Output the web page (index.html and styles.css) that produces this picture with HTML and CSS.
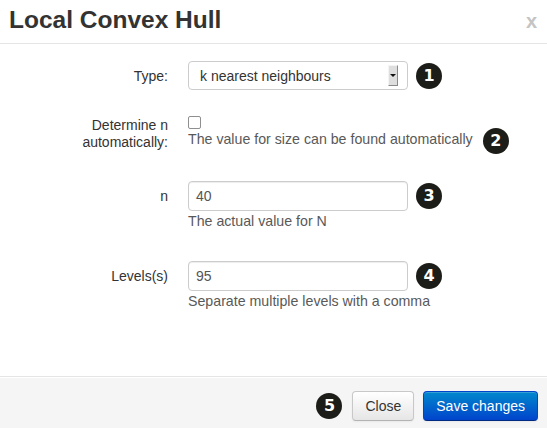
FILE: index.html
```html
<!DOCTYPE html>
<html>
<head>
<meta charset="utf-8">
<link rel="stylesheet" href="styles.css">
</head>
<body>
<div class="modal">
  <div class="modal-header">
    <h3 class="title">Local Convex Hull</h3>
    <span class="close">x</span>
  </div>
  <div class="modal-body">
    <div class="row">
      <label class="control-label">Type:</label>
      <div class="controls">
        <div class="line">
          <div class="select">
            <span class="select-text">k nearest neighbours</span>
            <span class="select-btn"><span class="tri"></span></span>
          </div>
          <span class="badge">1</span>
        </div>
      </div>
    </div>
    <div class="row row-check">
      <label class="control-label two">Determine n automatically:</label>
      <div class="controls">
        <div class="check-wrap"><span class="checkbox"></span></div>
        <div class="line">
          <span class="help">The value for size can be found automatically</span>
          <span class="badge badge-help">2</span>
        </div>
      </div>
    </div>
    <div class="row">
      <label class="control-label">n</label>
      <div class="controls">
        <div class="line">
          <div class="input">40</div>
          <span class="badge">3</span>
        </div>
        <span class="help help-below">The actual value for N</span>
      </div>
    </div>
    <div class="row">
      <label class="control-label">Levels(s)</label>
      <div class="controls">
        <div class="line">
          <div class="input">95</div>
          <span class="badge">4</span>
        </div>
        <span class="help help-below">Separate multiple levels with a comma</span>
      </div>
    </div>
  </div>
  <div class="modal-footer">
    <span class="badge badge-foot">5</span>
    <button class="btn">Close</button>
    <button class="btn btn-primary">Save changes</button>
  </div>
</div>
</body>
</html>
```
FILE: styles.css
```css
html, body {
  margin: 0;
  padding: 0;
  overflow: hidden;
  background: #fff;
}
body {
  font-family: "Liberation Sans", Arial, sans-serif;
  font-size: 14px;
  line-height: 20px;
  color: #333;
}
.modal {
  width: 547px;
}
.modal-header {
  display: flex;
  justify-content: space-between;
  align-items: flex-start;
  height: 44px;
  box-sizing: border-box;
  padding: 5px 10px 0 9px;
  border-bottom: 1px solid #e5e5e5;
}
.title {
  margin: 0;
  font-size: 24.5px;
  line-height: 30px;
  font-weight: bold;
  color: #333;
}
.close {
  font-size: 20px;
  font-weight: bold;
  line-height: 20px;
  margin-top: 6px;
  color: #c4c4c4;
}
.modal-body {
  padding: 17px 0 35px 8px;
}
.row {
  display: flex;
  margin-bottom: 20px;
}
.control-label {
  width: 160px;
  flex: none;
  text-align: right;
  padding-top: 5px;
  color: #333;
}
.control-label.two {
  padding-top: 7px;
  line-height: 17px;
}
.controls {
  margin-left: 20px;
  display: flex;
  flex-direction: column;
  align-items: flex-start;
}
.line {
  display: flex;
  align-items: center;
}
.select {
  width: 220px;
  height: 29px;
  box-sizing: border-box;
  border: 1px solid #ccc;
  border-radius: 4px;
  display: flex;
  align-items: center;
  justify-content: space-between;
  padding: 0 9px 0 11px;
  color: #333;
}
.select-btn {
  width: 10px;
  height: 21px;
  box-sizing: border-box;
  background: #dedede;
  border-right: 1px solid #8a8a8a;
  border-bottom: 1px solid #8a8a8a;
  border-top: 1px solid #f4f4f4;
  border-left: 1px solid #f4f4f4;
  display: flex;
  align-items: center;
  justify-content: center;
}
.tri {
  width: 0;
  height: 0;
  border-left: 3px solid transparent;
  border-right: 3px solid transparent;
  border-top: 3px solid #111;
}
.badge {
  flex: none;
  width: 26px;
  height: 26px;
  border-radius: 50%;
  background: #1c1c18;
  color: #fff;
  font-family: "DejaVu Sans", sans-serif;
  font-weight: bold;
  font-size: 16px;
  line-height: 26px;
  text-align: center;
  margin-left: 8px;
  margin-top: -3px;
  margin-bottom: -3px;
}
.badge-help {
  margin-left: 10px;
  position: relative;
  top: 2px;
}
.check-wrap {
  padding-top: 6px;
  height: 13px;
}
.checkbox {
  display: block;
  width: 11px;
  height: 11px;
  border: 1px solid #8f8f8f;
  border-radius: 2px;
  background: #fff;
}
.help {
  display: block;
  color: #595959;
  font-size: 14.2px;
}
.row-check .controls {
  padding-bottom: 12px;
}
.help-below {
  margin-bottom: 10px;
}
.input {
  width: 220px;
  height: 30px;
  box-sizing: border-box;
  border: 1px solid #ccc;
  border-radius: 4px;
  padding: 4px 7px;
  color: #555;
  box-shadow: inset 0 1px 1px rgba(0,0,0,0.075);
}
.modal-footer {
  border-top: 1px solid #e5e5e5;
  background: #f5f5f5;
  display: flex;
  justify-content: flex-end;
  align-items: center;
  padding: 14px 9px 7px;
  box-shadow: inset 0 1px 0 #fff;
}
.badge-foot {
  margin-left: 0;
  margin-right: 10px;
  margin-top: 0;
  margin-bottom: 0;
}
.btn {
  font-family: "Liberation Sans", Arial, sans-serif;
  font-size: 14px;
  line-height: 20px;
  height: 30px;
  padding: 4px 12px;
  border: 1px solid #c8c8c8;
  border-bottom-color: #b3b3b3;
  border-radius: 4px;
  color: #333;
  background: linear-gradient(#ffffff, #e6e6e6);
  box-shadow: inset 0 1px 0 rgba(255,255,255,0.2), 0 1px 2px rgba(0,0,0,0.05);
  margin-left: 9px;
}
.badge-foot + .btn {
  margin-left: 0;
}
.btn-primary {
  color: #fff;
  border-color: #0044cc #0044cc #002a80;
  background: linear-gradient(#0088cc, #0044cc);
}
```
